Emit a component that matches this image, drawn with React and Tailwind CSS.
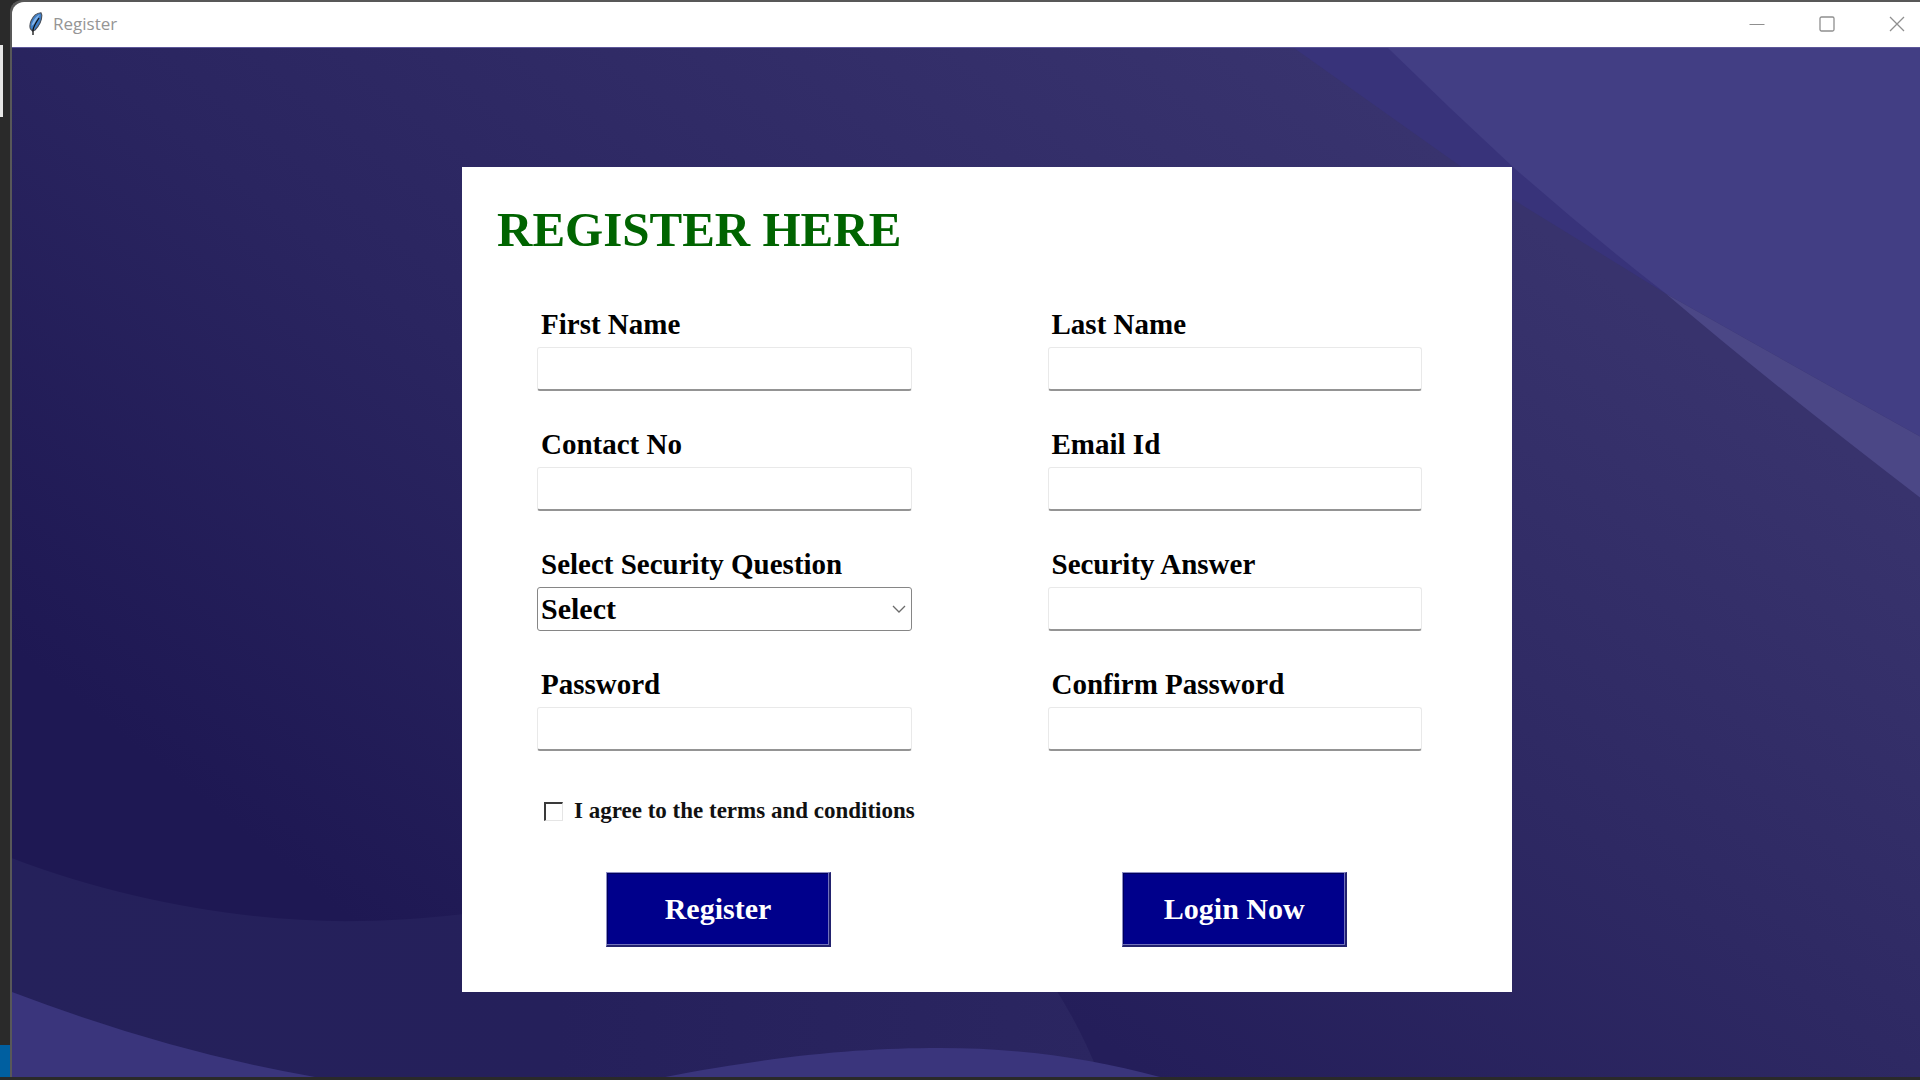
import React from "react";

const labelClass = "block pl-1 text-[29px] leading-[34px] font-bold text-black";
const inputClass =
  "mt-[6px] block h-[44px] w-full rounded-[3px] border border-[#e9e9e9] border-b-2 border-b-[#949494] bg-white px-1 text-3xl font-bold text-black outline-none";
const buttonClass =
  "h-[75px] w-[225px] border-t border-l border-r-2 border-b-2 border-t-[#8c8cc6] border-l-[#8c8cc6] border-r-[#22226e] border-b-[#22226e] bg-[#00008b] text-[30px] leading-[36px] font-bold text-white shadow-[inset_-1px_-1px_0_#7272bc,inset_1px_1px_0_#00005c]";

function Backdrop() {
  return (
    <svg
      className="absolute inset-0 h-full w-full"
      viewBox="12 47 1908 1030"
      preserveAspectRatio="none"
      aria-hidden="true"
    >
      <defs>
        <linearGradient id="base" gradientUnits="userSpaceOnUse" x1="200" y1="800" x2="1000" y2="-200">
          <stop offset="0" stopColor="#1e1853" />
          <stop offset="0.4" stopColor="#2a2560" />
          <stop offset="1" stopColor="#38336e" />
        </linearGradient>
        <linearGradient id="right" gradientUnits="userSpaceOnUse" x1="1100" y1="1040" x2="1640" y2="300">
          <stop offset="0" stopColor="#241e5a" />
          <stop offset="0.5" stopColor="#2e2963" />
          <stop offset="1" stopColor="#38336d" />
        </linearGradient>
        <linearGradient id="hill" gradientUnits="userSpaceOnUse" x1="12" y1="0" x2="1100" y2="0">
          <stop offset="0" stopColor="#25215b" />
          <stop offset="0.5" stopColor="#25205b" />
          <stop offset="1" stopColor="#2b2661" />
        </linearGradient>
      </defs>
      <rect x="12" y="47" width="1908" height="1030" fill="url(#base)" />
      <path d="M1000 580H1512V167H1920V1077H1000Z" fill="url(#right)" />
      <path d="M12 858C120 899 240 921 345 921C390 921 425 918 462 914L800 850L1020 940Q1070 1000 1100 1077H12Z" fill="url(#hill)" />
      <path d="M12 992Q170 1052 315 1077H12Z" fill="#3a357c" />
      <path d="M665 1077C780 1055 860 1048 940 1048C1020 1048 1090 1058 1160 1077Z" fill="#3a357c" />
      <path d="M1294 47L1463 167L1512 198Q1590 246 1666 293L1390 47Z" fill="#38337a" />
      <path d="M1388 47Q1450 108 1513 166Q1590 234 1666 293Q1770 352 1920 436V47Z" fill="#423e84" />
      <path d="M1666 293Q1770 382 1920 497V436Q1770 352 1666 293Z" fill="#4b4786" />
    </svg>
  );
}

function Feather() {
  return (
    <svg className="h-6 w-[14px]" viewBox="0 0 14 24" aria-hidden="true">
      <path d="M12 0.8C8 1 4 4.500 2 9C0.8 12 0.6 15 1.5 17L3.500 19L6 18C10 14 13 9 12.800 3Z" fill="#3f7fc8" stroke="#4a4f58" strokeWidth="1.1" />
      <path d="M11 2.5C7 4.500 4 8 2.500 14L5 12Z" fill="#86b6ea" />
      <path d="M10 6C8 9 5 13 4 18V23" fill="none" stroke="#111" strokeWidth="1.3" />
    </svg>
  );
}

function TitleBar() {
  return (
    <header className="flex h-[45px] items-center justify-between rounded-tl-xl bg-white pr-[15px] pb-px pl-[17px]">
      <div className="flex items-center gap-[10px]">
        <Feather />
        <span className="font-['Open_Sans',sans-serif] text-[17px] leading-6 text-[#959595]">Register</span>
      </div>
      <div className="flex items-center gap-[54px] text-[#8f8f8f]">
        <button type="button" aria-label="Minimize">
          <svg className="block size-4" viewBox="0 0 16 16"><path d="M0.5 8.5H15.5" stroke="currentColor" /></svg>
        </button>
        <button type="button" aria-label="Maximize">
          <svg className="block size-4" viewBox="0 0 16 16" fill="none"><rect x="1" y="1" width="14" height="14" rx="1.5" stroke="currentColor" strokeWidth="1.3" /></svg>
        </button>
        <button type="button" aria-label="Close">
          <svg className="block size-4" viewBox="0 0 16 16"><path d="M1 1L15 15M15 1L1 15" stroke="currentColor" strokeWidth="1.3" /></svg>
        </button>
      </div>
    </header>
  );
}

function Field({ id, label, type = "text" }) {
  return (
    <div>
      <label htmlFor={id} className={labelClass}>{label}</label>
      <input id={id} type={type} className={inputClass} />
    </div>
  );
}

function RegisterForm() {
  return (
    <form
      className="relative w-full max-w-[1050px] bg-white pt-[35px] pr-[90px] pb-[45px] pl-[75px] font-['Liberation_Serif',serif]"
      onSubmit={(e) => e.preventDefault()}
    >
      <h1 className="-ml-10 text-[49px] leading-[56px] font-bold text-[#006400]">REGISTER HERE</h1>
      <div className="mt-[49px] grid grid-cols-2 gap-x-[136px] gap-y-9">
        <Field id="first" label="First Name" />
        <Field id="last" label="Last Name" />
        <Field id="contact" label="Contact No" />
        <Field id="email" label="Email Id" type="email" />
        <div>
          <label htmlFor="question" className={labelClass}>Select Security Question</label>
          <div className="relative mt-[6px]">
            <select
              id="question"
              className="block h-[44px] w-full appearance-none rounded-[3px] border border-[#868686] bg-white pl-[3px] text-[30px] leading-[36px] font-bold text-black outline-none"
            >
              <option>Select</option>
            </select>
            <svg className="pointer-events-none absolute top-[18px] right-[6px] h-2 w-[14px]" viewBox="0 0 14 8" fill="none" aria-hidden="true">
              <path d="M1 1L7 7L13 1" stroke="#6b6b6b" strokeWidth="1.3" />
            </svg>
          </div>
        </div>
        <Field id="answer" label="Security Answer" />
        <Field id="password" label="Password" type="password" />
        <Field id="confirm" label="Confirm Password" type="password" />
      </div>
      <label className="mt-[46px] flex items-center gap-[11px] pl-[7px] text-[23px] leading-[28px] font-bold text-[#111]">
        <input
          type="checkbox"
          className="size-[19px] appearance-none border-t-2 border-r border-b border-l-2 border-t-[#3a3a3a] border-r-[#e5e5e5] border-b-[#e5e5e5] border-l-[#3a3a3a] bg-white"
        />
        I agree to the terms and conditions
      </label>
      <div className="mt-[47px] grid grid-cols-2 gap-x-[136px]">
        <div className="flex pl-[69px]"><button type="submit" className={buttonClass}>Register</button></div>
        <div className="flex justify-center"><button type="button" className={buttonClass}>Login Now</button></div>
      </div>
    </form>
  );
}

export default function App() {
  return (
    <div className="flex min-h-screen bg-[#2a2a2a] pb-[3px]">
      <aside className="flex w-[10px] shrink-0 flex-col justify-between pt-[45px]">
        <div className="h-[72px] w-[3px] bg-[#e8e8e8]" />
        <div className="h-8 w-full bg-[#005fa0]" />
      </aside>
      <div className="flex flex-1 flex-col rounded-tl-xl border-t-2 border-l-2 border-[#585858] bg-[#585858]">
        <TitleBar />
        <main className="relative flex flex-1 items-start justify-center overflow-hidden border-t border-[#5c5799] pt-[119px] pb-[84px] pl-[42px]">
          <Backdrop />
          <RegisterForm />
        </main>
      </div>
    </div>
  );
}
